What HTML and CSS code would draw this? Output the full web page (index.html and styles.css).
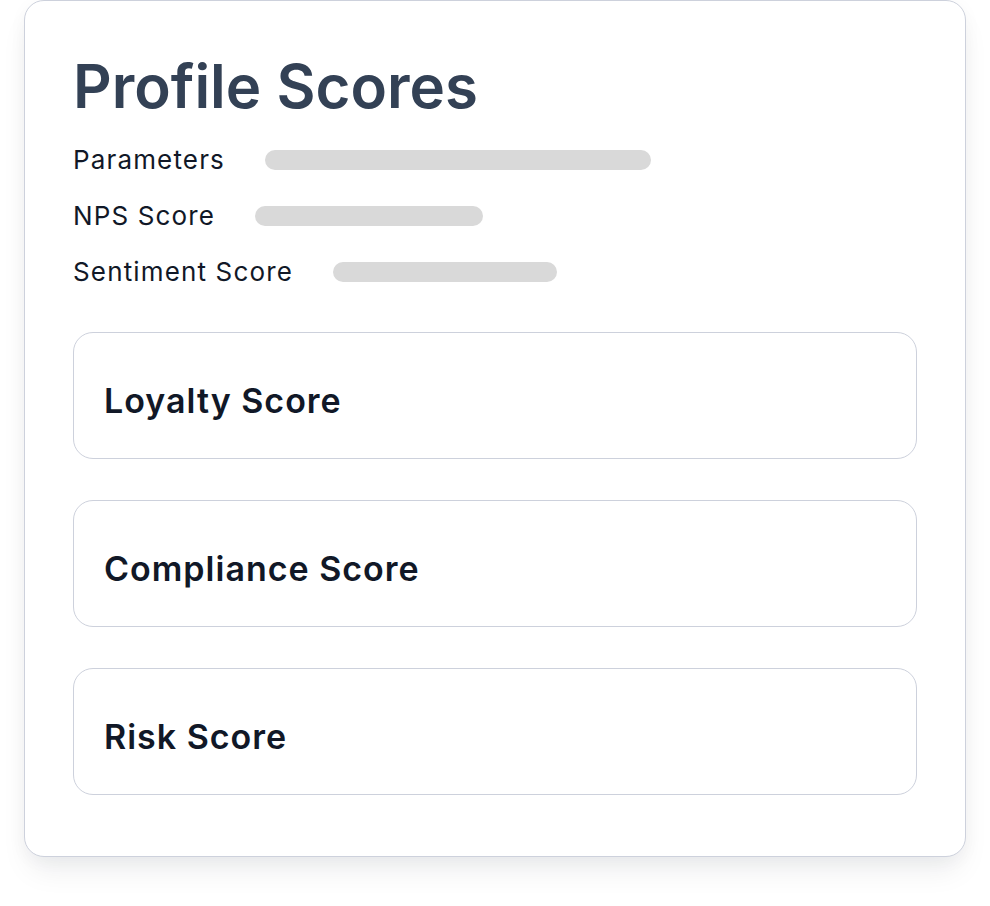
FILE: index.html
```html
<!DOCTYPE html>
<html lang="en">
<head>
<meta charset="utf-8">
<title>Profile Scores</title>
<link rel="stylesheet" href="styles.css">
</head>
<body>
<div class="page">
  <section class="card">
    <h1 class="title">Profile Scores</h1>
    <div class="params">
      <div class="param"><span class="param-label">Parameters</span><span class="bar bar-params"></span></div>
      <div class="param"><span class="param-label">NPS Score</span><span class="bar bar-nps"></span></div>
      <div class="param"><span class="param-label">Sentiment Score</span><span class="bar bar-sentiment"></span></div>
    </div>
    <div class="scores">
      <div class="score-box"><h2 class="score-title">Loyalty Score</h2></div>
      <div class="score-box"><h2 class="score-title">Compliance Score</h2></div>
      <div class="score-box"><h2 class="score-title">Risk Score</h2></div>
    </div>
  </section>
</div>
</body>
</html>
```

FILE: styles.css
```css
html, body {
  margin: 0;
  padding: 0;
  background: #ffffff;
}

body {
  font-family: Inter, "Noto Sans", "Liberation Sans", sans-serif;
}

.page {
  padding: 0 24px 48px;
}

.card {
  box-sizing: border-box;
  background: #ffffff;
  border: 1px solid #cdd1dc;
  border-radius: 20px;
  padding: 48px 48px 61px;
  box-shadow: 0 18px 30px -6px rgba(15, 23, 42, 0.08), 0 4px 18px rgba(15, 23, 42, 0.04);
}

.title {
  margin: 0 0 20px;
  font-size: 60px;
  line-height: 75px;
  font-weight: 600;
  color: #334155;
}

.params {
  display: flex;
  flex-direction: column;
  gap: 24px;
  margin-bottom: 44px;
}

.param {
  display: flex;
  align-items: center;
  gap: 40px;
  height: 32px;
}

.param-label {
  font-size: 26px;
  line-height: 32px;
  letter-spacing: 1.15px;
  color: #111827;
}

.bar {
  display: block;
  height: 20px;
  border-radius: 10px;
  background: #d9d9d9;
}

.bar-params { width: 386px; }
.bar-nps { width: 228px; }
.bar-sentiment { width: 224px; }

.scores {
  display: flex;
  flex-direction: column;
  gap: 41px;
}

.score-box {
  box-sizing: border-box;
  height: 127px;
  border: 1px solid #cdd1dc;
  border-radius: 20px;
  padding: 48px 30px 0;
}

.score-title {
  margin: 0;
  font-size: 34px;
  line-height: 40px;
  font-weight: 600;
  letter-spacing: 1px;
  color: #111827;
}
```
